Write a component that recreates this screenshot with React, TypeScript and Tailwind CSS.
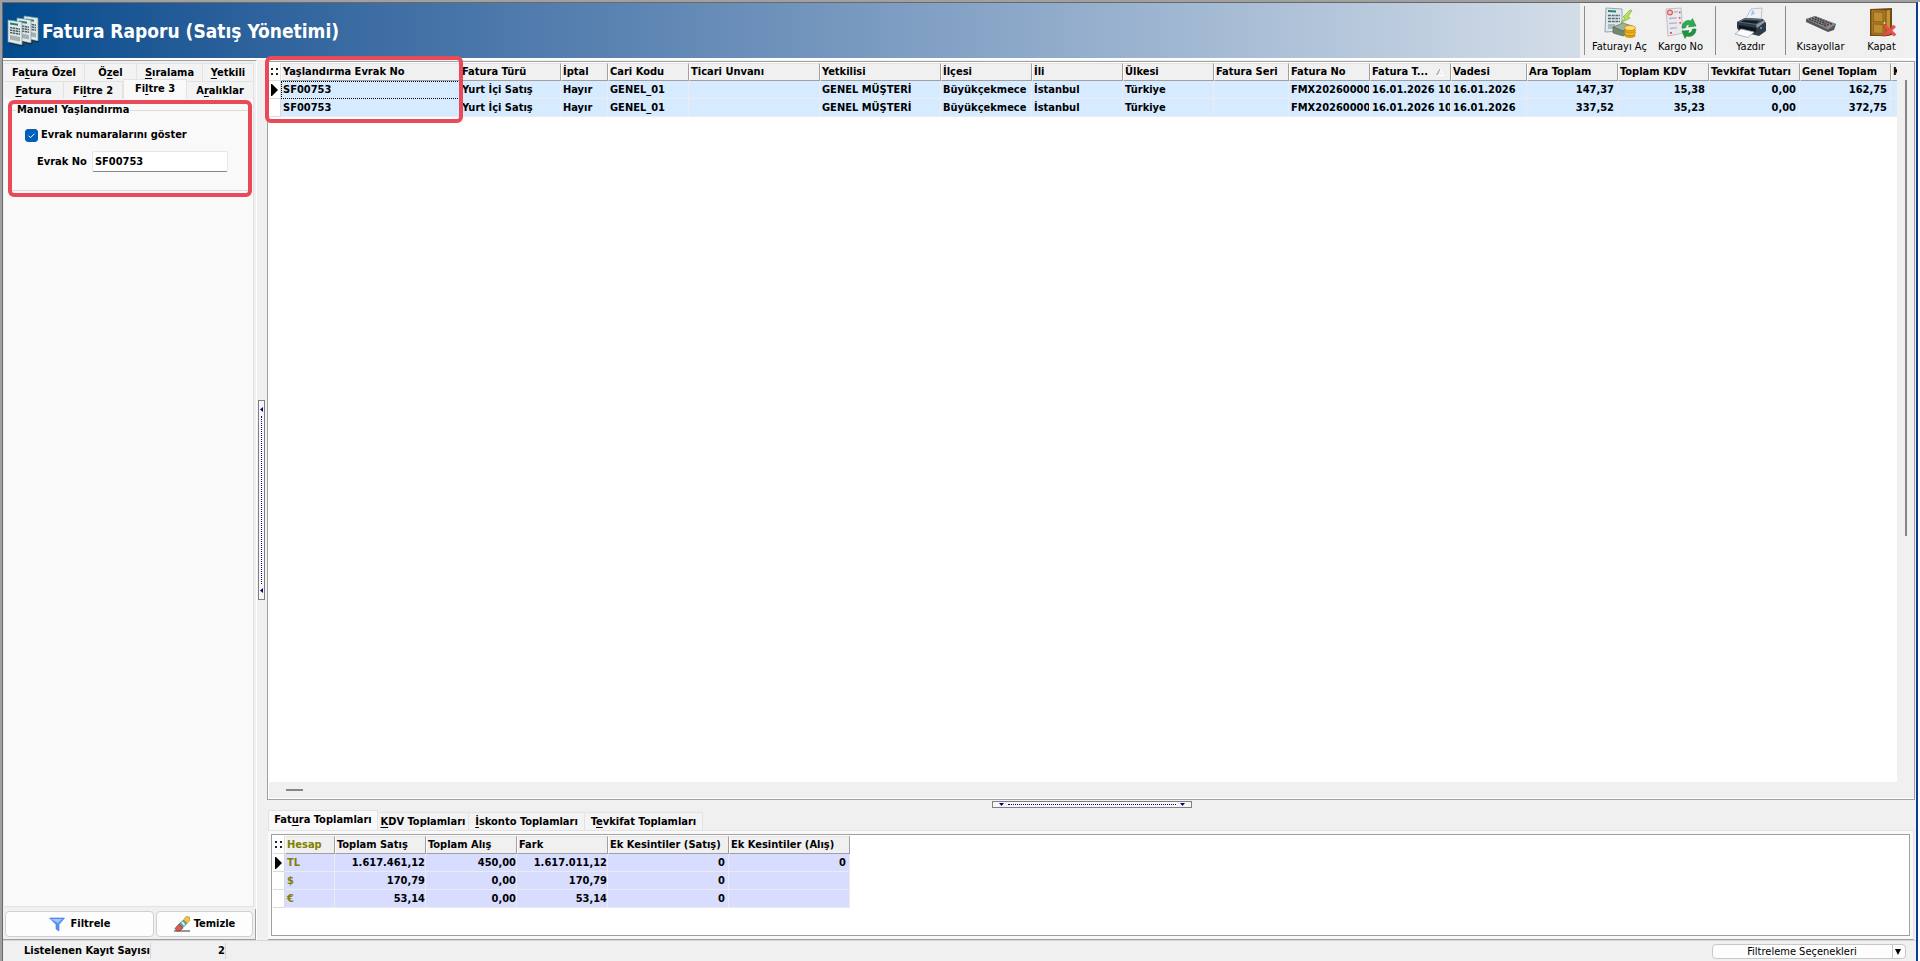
import { ReactNode } from "react";

type Column = {
  title: string;
  width: string;
  numeric?: boolean;
  sorted?: boolean;
};

const columns: Column[] = [
  { title: "Yaşlandırma Evrak No", width: "w-[179px]" },
  { title: "Fatura Türü", width: "w-[101px]" },
  { title: "İptal", width: "w-[47px]" },
  { title: "Cari Kodu", width: "w-[81px]" },
  { title: "Ticari Unvanı", width: "w-[131px]" },
  { title: "Yetkilisi", width: "w-[121px]" },
  { title: "İlçesi", width: "w-[91px]" },
  { title: "İli", width: "w-[91px]" },
  { title: "Ülkesi", width: "w-[91px]" },
  { title: "Fatura Seri", width: "w-[75px]" },
  { title: "Fatura No", width: "w-[81px]" },
  { title: "Fatura T...", width: "w-[81px]", sorted: true },
  { title: "Vadesi", width: "w-[76px]" },
  { title: "Ara Toplam", width: "w-[91px]", numeric: true },
  { title: "Toplam KDV", width: "w-[91px]", numeric: true },
  { title: "Tevkifat Tutarı", width: "w-[91px]", numeric: true },
  { title: "Genel Toplam", width: "w-[91px]", numeric: true },
  { title: "K", width: "w-[91px]" },
];

const common = ["Yurt İçi Satış", "Hayır", "GENEL_01", "", "GENEL MÜŞTERİ", "Büyükçekmece", "İstanbul", "Türkiye", "", "FMX20260000", "16.01.2026 10", "16.01.2026"];

const invoices = [
  ["SF00753", ...common, "147,37", "15,38", "0,00", "162,75", ""],
  ["SF00753", ...common, "337,52", "35,23", "0,00", "372,75", ""],
];

const totalColumns: Column[] = [
  { title: "Hesap", width: "w-[50px]" },
  { title: "Toplam Satış", width: "w-[91px]" },
  { title: "Toplam Alış", width: "w-[91px]" },
  { title: "Fark", width: "w-[91px]" },
  { title: "Ek Kesintiler (Satış)", width: "w-[121px]" },
  { title: "Ek Kesintiler (Alış)", width: "w-[121px]" },
];

const totals = [
  ["TL", "1.617.461,12", "450,00", "1.617.011,12", "0", "0"],
  ["$", "170,79", "0,00", "170,79", "0", ""],
  ["€", "53,14", "0,00", "53,14", "0", ""],
];

const headCell =
  "h-[18px] overflow-hidden border-t border-r border-b border-l border-t-[#e3e3e3] border-l-white border-r-[#a0a0a0] border-b-[#a0a0a0] bg-[#f0f0f0] p-0 pl-px text-left whitespace-nowrap";
const markCell = "h-[18px] border-r border-b border-[#dcdcdc] bg-white p-0";

// "Fa_t_ura" -> the letter between underscores is the access key
function Hot({ text }: { text: string }) {
  const [before, key, after] = text.split("_");
  return (
    <>
      {before}
      <span className="underline decoration-1 underline-offset-2">{key}</span>
      {after}
    </>
  );
}

function RowArrow() {
  return (
    <svg className="mx-auto block h-[12px] w-[7px]" viewBox="0 0 7 12">
      <path d="M0 0h1l6 6-6 6H0z" fill="#000" />
    </svg>
  );
}

function GripDots() {
  return (
    <svg className="mx-auto block h-[8px] w-[8px]" viewBox="0 0 8 8" fill="#222">
      <path d="M0 0h2v2H0zM5 0h2v2H5zM0 5h2v2H0zM5 5h2v2H5z" />
    </svg>
  );
}

function ReportIcon() {
  const sheet = (x: number, y: number) => (
    <g key={x} transform={`translate(${x} ${y})`}>
      <path d="M0 0l14 2v23L0 22z" fill="#e3eaea" stroke="#7f979e" strokeWidth=".7" />
      <path d="M2 2.500l8 1.300v2L2 4.500z" fill="#1f8080" />
      <path d="M2 7.500l10 1.700M2 10l10 1.700M2 12.500l10 1.700" stroke="#4e5e63" strokeWidth="1.500" strokeDasharray="2.500 .5" />
      <path d="M2 15l10 2v4.500L2 19.500z" fill="#a3b0b4" />
      <path d="M1 23l13 3 1.500-1.500" stroke="#1d2b33" strokeWidth="1.200" fill="none" />
    </g>
  );
  return (
    <svg className="h-8 w-8 shrink-0" viewBox="0 0 32 32">
      {sheet(17, 1)}
      {sheet(10, 3)}
      {sheet(1, 5)}
    </svg>
  );
}

function OpenInvoiceIcon() {
  return (
    <svg className="h-8 w-8" viewBox="0 0 32 32">
      <path d="M2 1l16 1v22l-17 1z" fill="#dfeaec" stroke="#7e9499" strokeWidth=".8" />
      <path d="M4 3l8 .5v2L4 5z" fill="#2a7f80" />
      <path d="M4 8.500h12M4 11.500h12M4 14.500h12" stroke="#55696e" strokeWidth="1.600" strokeDasharray="3 .7" />
      <path d="M4 17h7v5H4z" fill="#a9bbc0" />
      <path d="M26 3l-7 7 2 1-4 5 9-5-2-1.500 4-6z" fill="#b6e35a" stroke="#6aa81c" strokeWidth=".6" />
      <path d="M9 20l10-4 9 3-9 5z" fill="#9fb39c" stroke="#5e735c" strokeWidth=".7" />
      <path d="M9 20v6l10 3 9-4v-6l-9 5z" fill="#71876f" stroke="#4f604e" strokeWidth=".6" />
      <ellipse cx="26" cy="28.500" rx="5.500" ry="2.600" fill="#d99a10" />
      <ellipse cx="26" cy="26" rx="5.500" ry="2.600" fill="#f0bb2c" stroke="#b77d08" strokeWidth=".6" />
      <ellipse cx="26" cy="23.500" rx="5.500" ry="2.600" fill="#e5a81b" stroke="#b77d08" strokeWidth=".6" />
      <ellipse cx="26" cy="21" rx="5.500" ry="2.600" fill="#ffdc62" stroke="#b77d08" strokeWidth=".6" />
    </svg>
  );
}

function CargoIcon() {
  return (
    <svg className="h-8 w-8" viewBox="0 0 32 32">
      <path d="M1 2l15-1 2 25-15 3z" fill="#e9e9ee" stroke="#b3b3bd" strokeWidth=".8" />
      <circle cx="5" cy="5.500" r="2.400" fill="#f6c9cb" stroke="#e0555c" strokeWidth="1.200" />
      <path d="M9 5l4-.3M4 11.500l8-.6M4 16.500l8-.6M5 21.500l7-.8" stroke="#b5b5be" strokeWidth="1.300" />
      <path d="M14 5.500l1.500-.2M14 11l1.500-.2M14.500 16l1.500-.2M5 26l2-.3" stroke="#dd3b44" strokeWidth="1.600" />
      <path d="M17 21c0-6 5-9 9-7l1.500-2.500L31 19l-7.500 1 1-2.500c-2.500-.5-3.500 1-4 3.500z" fill="#2bab4d" stroke="#137a30" strokeWidth=".5" />
      <path d="M31 22c0 6-5 8.500-9.500 7L20 31.500 17 24l7-.5-1 2.500c2.500.5 4-1 4.500-4z" fill="#1f9440" stroke="#137a30" strokeWidth=".5" />
    </svg>
  );
}

function PrinterIcon() {
  return (
    <svg className="h-8 w-8" viewBox="0 0 32 32">
      <path d="M10 13l6-11 11-1-1 13z" fill="#eef1f4" stroke="#a7b0b8" strokeWidth=".7" />
      <path d="M17 3l3 3-4 3z" fill="#9cc3ee" />
      <path d="M2 15l8-4 18 1 3 4v8l-7 5-20-5-2-3z" fill="#2f3b46" />
      <path d="M2 15l8-4 18 1-7 6z" fill="#566674" />
      <path d="M9 13l16 .8-4 3-15-2z" fill="#141d26" />
      <path d="M21 18l8-5 1 2-8 6z" fill="#8b9aa7" />
      <path d="M4 18l17 3v4L4 22z" fill="#0f161d" />
      <path d="M0 27l6-5 13 3-6 5.500z" fill="#fbfcfd" stroke="#9aa5ae" strokeWidth=".8" />
      <circle cx="26" cy="21" r="1" fill="#5aa7e6" />
    </svg>
  );
}

function KeyboardIcon() {
  return (
    <svg className="h-8 w-8" viewBox="0 0 32 32">
      <path d="M1 12l9-3 21 8-2 6-6 2L1 15z" fill="#55555a" />
      <path d="M1 12l9-3 21 8-8 5.500z" fill="#8a8a8f" />
      <path d="M4 12l18 7.500M7 11l17 7.200M10 10.300l17 7" stroke="#3c3c41" strokeWidth="1.400" strokeDasharray="2 .7" />
      <path d="M11 13.500l3 1.200M19 15.500l3 1.200" stroke="#b2555a" strokeWidth="1" />
    </svg>
  );
}

function DoorIcon() {
  return (
    <svg className="h-8 w-8" viewBox="0 0 32 32">
      <path d="M4 2l22-1v27l-4 1H4z" fill="#6d4b14" />
      <path d="M20 3.500l4-.5v24l-4 1z" fill="#c59435" />
      <path d="M5 2.500L20 3v26L5 28z" fill="#a97722" stroke="#6b4712" strokeWidth=".8" />
      <path d="M7.500 5l9.500.5v9.500l-9.500-.5zM7.500 17l9.500.5v9L7.500 26z" fill="#bd8b30" stroke="#83591a" strokeWidth=".7" />
      <circle cx="18.500" cy="16" r=".9" fill="#f5dc8e" />
      <path d="M17 19.500l2.500-1.500 4 4 4-4 2 2-3.500 3.500 4 4-2 1.500-4.500-3.500-4.500 3.500-1.500-1.500 4-4z" fill="#ee4d4f" stroke="#c42b31" strokeWidth=".5" />
    </svg>
  );
}

function ToolButton({ label, icon }: { label: string; icon: ReactNode }) {
  return (
    <button className="flex w-[61px] flex-col items-center pt-1 font-normal">
      {icon}
      <span className="leading-4 whitespace-nowrap">{label}</span>
    </button>
  );
}

function ToolSeparator() {
  return <div className="mx-1 my-[3px] w-px bg-[#8c8c8c]" />;
}

function Header() {
  return (
    <header className="flex h-[55px] shrink-0">
      <div className="flex grow items-center gap-[3px] bg-linear-to-r from-[#004b8d] to-[#d3dde8] pl-1">
        <ReportIcon />
        <h1 className="text-[19px] leading-6 font-bold text-white">Fatura Raporu (Satış Yönetimi)</h1>
      </div>
      <div className="flex shrink-0 bg-[#f0f0f0] pr-1">
        <ToolSeparator />
        <ToolButton label="Faturayı Aç" icon={<OpenInvoiceIcon />} />
        <ToolButton label="Kargo No" icon={<CargoIcon />} />
        <ToolSeparator />
        <ToolButton label="Yazdır" icon={<PrinterIcon />} />
        <ToolSeparator />
        <ToolButton label="Kısayollar" icon={<KeyboardIcon />} />
        <ToolButton label="Kapat" icon={<DoorIcon />} />
      </div>
    </header>
  );
}

function FilterPanel() {
  const tab = "h-[18px] border-t border-r border-[#e3e3e3] bg-[#f3f3f3] leading-4 whitespace-nowrap";
  return (
    <aside className="flex w-[254px] shrink-0 flex-col border-t border-r border-t-[#a0a0a0] border-r-white bg-[#f0f0f0] pt-0.5">
      <div className="flex pr-0.5 pl-px">
        <button className={`${tab} w-[81px]`}><Hot text="Fa_t_ura Özel" /></button>
        <button className={`${tab} w-[52px]`}><Hot text="Ö_z_el" /></button>
        <button className={`${tab} w-[66px]`}><Hot text="_S_ıralama" /></button>
        <button className={`${tab} grow`}><Hot text="_Y_etkili" /></button>
      </div>
      <div className="flex items-end pr-0.5 pl-px">
        <button className={`${tab} w-[60px]`}><Hot text="_F_atura" /></button>
        <button className={`${tab} w-[59px]`}><Hot text="Fi_l_tre 2" /></button>
        <button className="-mt-0.5 h-5 w-[64px] border-x border-t border-[#e3e3e3] bg-[#f9f9f9] pb-0.5 leading-4 whitespace-nowrap">
          <Hot text="Fi_l_tre 3" />
        </button>
        <button className={`${tab} grow`}><Hot text="A_r_alıklar" /></button>
      </div>
      <div className="relative mr-0.5 ml-px grow border-r border-b border-[#e3e3e3] bg-[#f9f9f9]">
        <fieldset className="mx-1 mt-1 h-[88px] border-t border-b border-[#dcdcdc]">
          <legend className="ml-2 px-px leading-[14px]">Manuel Yaşlandırma</legend>
          <label className="mt-2.5 ml-[17px] flex items-center gap-[3px] leading-4">
            <span className="relative flex">
              <input type="checkbox" defaultChecked className="peer h-[13px] w-[13px] appearance-none rounded-[3px] border border-[#868686] bg-white checked:border-[#005fb8] checked:bg-[#005fb8]" />
              <svg className="pointer-events-none absolute inset-0 hidden h-[13px] w-[13px] peer-checked:block" viewBox="0 0 13 13">
                <path d="M3.500 6.700l2 2 4-4" fill="none" stroke="#fff" />
              </svg>
            </span>
            Evrak numaralarını göster
          </label>
          <div className="mt-2 ml-[29px] flex items-center gap-[5px]">
            <label htmlFor="evrakNo">Evrak No</label>
            <input
              id="evrakNo"
              defaultValue="SF00753"
              className="h-[21px] w-[136px] rounded-[2px] border border-b border-[#e6e6e6] border-b-[#868686] bg-white px-0.5 outline-none"
            />
          </div>
        </fieldset>
        <div className="pointer-events-none absolute top-px left-1 h-[97px] w-[244px] rounded-md border-4 border-[#e84a5a]" />
      </div>
      <div className="mt-0.5 flex gap-0.5 border-r border-b border-[#a0a0a0] p-0.5">
        <button className="flex h-[26px] w-[149px] items-center justify-center gap-1.5 rounded border border-[#d0d0d0] bg-[#fdfdfd]">
          <svg className="h-4 w-4" viewBox="0 0 16 16">
            <path d="M.5 2h15L10 8.500V15l-3-2V8.500z" fill="#5b93f5" stroke="#3f74d6" strokeWidth=".6" />
            <path d="M2 3h11L9 7z" fill="#a5c5ff" />
          </svg>
          Filtrele
        </button>
        <button className="flex h-[26px] grow items-center justify-center gap-1 rounded border border-[#d0d0d0] bg-[#fdfdfd]">
          <svg className="h-4 w-4" viewBox="0 0 16 16">
            <path d="M0 15h16" stroke="#555" strokeWidth="1.200" />
            <path d="M12 .5L15.500 1v4L12 8 9 5z" fill="#f2c43a" stroke="#a37b12" strokeWidth=".5" />
            <path d="M9.500 4l3.500 3.500-4 4-4-3.500z" fill="#5da9a0" stroke="#47635f" strokeWidth=".5" />
            <path d="M8 6l2.500 3" stroke="#fff" strokeWidth="1.600" />
            <path d="M5 8l4 4-3 3H3l-2-2.500z" fill="#e2564c" stroke="#5d4a48" strokeWidth=".7" />
          </svg>
          Temizle
        </button>
      </div>
    </aside>
  );
}

function InvoiceGrid() {
  return (
    <div className="mt-px mr-px flex grow flex-col border border-[#a0a0a0] bg-white pt-px pb-px pl-px">
      <div className="flex grow">
        <div className="w-0 grow overflow-hidden">
          <table className="w-[1713px] table-fixed border-separate border-spacing-0">
            <thead>
              <tr>
                <th className={`${markCell} w-[12px]`}><GripDots /></th>
                {columns.map((column) => (
                  <th key={column.title} className={`${headCell} ${column.width}`}>
                    {column.title}
                    {column.sorted && (
                      <svg className="ml-2 inline-block h-[7px] w-[8px]" viewBox="0 0 8 7">
                        <path d="M4 0L.5 6.500" stroke="#8c8c8c" />
                        <path d="M4 0l3.500 6.500H.5" fill="none" stroke="#fff" />
                      </svg>
                    )}
                  </th>
                ))}
              </tr>
            </thead>
            <tbody>
              {invoices.map((row, i) => (
                <tr key={i}>
                  <td className={markCell}>{i === 0 && <RowArrow />}</td>
                  {row.map((value, j) => (
                    <td
                      key={j}
                      className={`h-[18px] overflow-hidden border-r border-b border-[#ececec] bg-[#d6ebff] p-0 pt-px pl-0.5 whitespace-nowrap ${
                        i === 0 && j === 0 ? "outline outline-dotted -outline-offset-1 outline-black" : ""
                      } ${columns[j].numeric ? "pr-[3px] text-right" : ""}`}
                    >
                      {value}
                    </td>
                  ))}
                </tr>
              ))}
            </tbody>
          </table>
        </div>
        <div className="flex w-[17px] flex-col items-center bg-[#f0f0f0] pt-[17px]">
          <div className="h-[456px] w-0.5 bg-[#868686]" />
        </div>
      </div>
      <div className="flex h-4 items-center bg-[#f0f0f0] pl-[17px]">
        <div className="h-0.5 w-[17px] bg-[#868686]" />
      </div>
    </div>
  );
}

function TotalsPanel() {
  const tab = "h-[18px] border-t border-r border-[#e3e3e3] bg-[#f3f3f3] leading-4 whitespace-nowrap";
  return (
    <div className="mr-0.5 ml-px shrink-0">
      <div className="flex items-end">
        <button className="h-5 w-[110px] border-x border-t border-[#e3e3e3] bg-[#f9f9f9] pb-0.5 leading-4 whitespace-nowrap">
          <Hot text="Fat_u_ra Toplamları" />
        </button>
        <button className={`${tab} w-[91px]`}><Hot text="_K_DV Toplamları" /></button>
        <button className={`${tab} w-[116px]`}><Hot text="_İ_skonto Toplamları" /></button>
        <button className={`${tab} w-[118px]`}><Hot text="T_e_vkifat Toplamları" /></button>
      </div>
      <div className="border-t border-r border-[#e3e3e3] border-b border-b-[#a0a0a0] bg-[#f9f9f9] p-[3px]">
        <div className="h-[102px] border border-[#a0a0a0] bg-white p-px">
          <table className="w-[577px] table-fixed border-separate border-spacing-0">
            <thead>
              <tr>
                <th className={`${markCell} w-[12px]`}><GripDots /></th>
                {totalColumns.map((column, j) => (
                  <th key={column.title} className={`${headCell} ${column.width} ${j === 0 ? "text-[#808000]" : ""}`}>
                    {column.title}
                  </th>
                ))}
              </tr>
            </thead>
            <tbody>
              {totals.map((row, i) => (
                <tr key={row[0]}>
                  <td className={markCell}>{i === 0 && <RowArrow />}</td>
                  {row.map((value, j) => (
                    <td
                      key={j}
                      className={`h-[18px] border-r border-b border-[#ececec] bg-[#d8dcff] p-0 ${
                        j === 0 ? "pl-0.5 text-[#808000]" : "text-right"
                      } ${j > 3 ? "pr-[3px]" : ""}`}
                    >
                      {value}
                    </td>
                  ))}
                </tr>
              ))}
            </tbody>
          </table>
        </div>
      </div>
    </div>
  );
}

function StatusBar() {
  return (
    <footer className="flex h-[21px] shrink-0 items-start border-t border-[#d7d7d7] bg-[#f0f0f0]">
      <div className="mt-0.5 w-[148px] border-r border-[#d7d7d7] text-right leading-4">Listelenen Kayıt Sayısı</div>
      <div className="mt-0.5 w-[75px] border-r border-[#d7d7d7] text-right leading-4">2</div>
      <div className="relative mt-[3px] mr-2.5 ml-auto">
        <select
          aria-label="Filtreleme Seçenekleri"
          className="block h-[15px] w-[194px] appearance-none rounded border border-[#c8c8c8] bg-[#fdfdfd] pr-[14px] text-center font-normal leading-[13px] [text-align-last:center]"
        >
          <option>Filtreleme Seçenekleri</option>
        </select>
        <svg className="pointer-events-none absolute top-0 right-0 h-[15px] w-[14px]" viewBox="0 0 14 15">
          <path d="M.5 1v13" stroke="#c8c8c8" />
          <path d="M3 5h6l-3 6z" fill="#000" />
        </svg>
      </div>
    </footer>
  );
}

export default function App() {
  return (
    <div className="h-screen border-t-2 border-l-2 border-[#a0a0a0] bg-white pr-0.5 font-['DejaVu_Sans_Condensed','DejaVu_Sans',sans-serif] text-[11px] leading-4 font-bold text-black">
      <div className="flex h-full flex-col border-t border-r-2 border-l border-t-[#696969] border-r-[#0a3c96] border-l-[#696969]">
        <Header />
        <main className="mt-0.5 flex min-h-0 grow">
          <FilterPanel />
          <div className="flex w-[10px] shrink-0 items-center bg-[#f0f0f0] pl-px">
            <button aria-label="Filtre panelini gizle" className="flex h-[200px] w-[7px] flex-col items-center justify-between border border-[#808080] bg-[#f7f7f7] py-1.5">
              <svg className="h-[5px] w-[3px]" viewBox="0 0 3 5"><path d="M3 0v5L0 2.500z" fill="#000080" /></svg>
              <span className="h-[168px] border-l border-dotted border-[#000080]" />
              <svg className="h-[5px] w-[3px]" viewBox="0 0 3 5"><path d="M3 0v5L0 2.500z" fill="#000080" /></svg>
            </button>
          </div>
          <section className="relative flex min-w-0 grow flex-col bg-[#f0f0f0]">
            <InvoiceGrid />
            <div className="flex h-[10px] shrink-0 justify-center pt-px">
              <button aria-label="Toplamları gizle" className="flex h-[7px] w-[200px] items-center justify-between border border-[#808080] bg-[#f7f7f7] px-1.5">
                <svg className="h-[3px] w-[5px]" viewBox="0 0 5 3"><path d="M0 0h5L2.500 3z" fill="#000080" /></svg>
                <span className="w-[168px] border-t border-dotted border-[#000080]" />
                <svg className="h-[3px] w-[5px]" viewBox="0 0 5 3"><path d="M0 0h5L2.500 3z" fill="#000080" /></svg>
              </button>
            </div>
            <TotalsPanel />
            <div className="pointer-events-none absolute -top-1 -left-0.5 h-[67px] w-[198px] rounded-md border-4 border-[#e84a5a]" />
          </section>
        </main>
        <StatusBar />
      </div>
    </div>
  );
}
